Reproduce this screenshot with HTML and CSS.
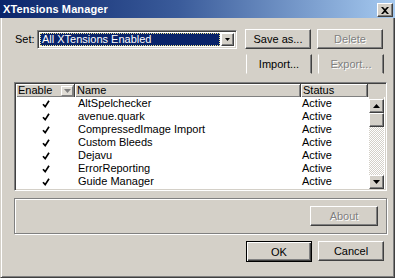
FILE: index.html
```html
<!DOCTYPE html>
<html lang="en">
<head>
  <meta charset="UTF-8" />
  <title>XTensions Manager</title>
  <link rel="stylesheet" href="styles.css">
</head>
<body>
  <div class="window">
    <div class="titlebar">
      <span class="title">XTensions Manager</span>
      <button class="close" type="button">
        <svg width="8" height="7" viewBox="0 0 8 7"><path d="M0 0h2l2 2 2-2h2L5 3.5 8 7H6L4 5 2 7H0l3-3.5z" fill="#000"/></svg>
      </button>
    </div>

    <div class="content">
      <div class="set-row">
        <label class="set-label">Set:</label>
        <div class="combo">
          <span class="combo-value"><span class="combo-text">All XTensions Enabled</span></span>
          <span class="combo-arrow"><svg width="5" height="3" viewBox="0 0 5 3"><path d="M0 0h5L2.5 3z" fill="#000"/></svg></span>
        </div>
        <button class="btn" type="button">Save as...</button>
        <button class="btn" type="button" disabled>Delete</button>
      </div>

      <div class="btn-row tight">
        <button class="btn flat" type="button">Import...</button>
        <button class="btn flat" type="button" disabled>Export...</button>
      </div>

      <div class="list">
        <div class="list-head">
          <div class="col-enable head-cell">Enable<span class="head-drop"><svg width="7" height="4" viewBox="0 0 7 4"><path d="M0 0h7L3.5 4z" fill="#808080"/></svg></span></div>
          <div class="col-name head-cell">Name</div>
          <div class="col-status head-cell">Status</div>
          <div class="head-fill"></div>
        </div>
        <div class="list-body">
          <div class="rows" id="rows"></div>
          <div class="scrollbar">
            <span class="sb-btn"><svg width="7" height="4" viewBox="0 0 7 4"><path d="M0 4h7L3.5 0z" fill="#000"/></svg></span>
            <span class="sb-thumb"></span>
            <span class="sb-track"></span>
            <span class="sb-btn"><svg width="7" height="4" viewBox="0 0 7 4"><path d="M0 0h7L3.5 4z" fill="#000"/></svg></span>
          </div>
        </div>
      </div>

      <div class="group">
        <button class="btn" type="button" disabled>About</button>
      </div>

      <div class="btn-row">
        <button class="btn default" type="button">OK</button>
        <button class="btn" type="button">Cancel</button>
      </div>
    </div>
  </div>

  <script>
    const xtensions = ['AltSpelchecker', 'avenue.quark', 'CompressedImage Import', 'Custom Bleeds', 'Dejavu', 'ErrorReporting', 'Guide Manager'];
    const rowsEl = document.getElementById('rows');
    xtensions.forEach(name => {
      const row = document.createElement('div');
      row.className = 'row';
      row.innerHTML = `<div class="col-enable cell-check"><svg width="8" height="8" viewBox="0 0 8 8"><path d="M1 4.2L3.2 6.6L7 0.8" fill="none" stroke="#000" stroke-width="1.7"/></svg></div>
        <div class="col-name cell">${name}</div>
        <div class="col-status cell">Active</div>`;
      rowsEl.appendChild(row);
    });
  </script>
</body>
</html>
```

FILE: styles.css
```css
:root {
  --face: #d4d0c8;
  --shadow: #808080;
  --dark: #404040;
  --navy: #0a246a;
}
* { box-sizing: border-box; }
body {
  margin: 0;
  background: var(--face);
  font-family: "Liberation Sans", Arial, sans-serif;
  font-size: 11px;
  color: #000;
}
.window {
  width: 395px;
  height: 278px;
  background: var(--face);
  border: 1px solid;
  border-top: 0;
  border-color: var(--face) var(--dark) var(--dark) var(--face);
  box-shadow: inset 1px 0 #fff, inset -1px -1px var(--shadow);
  display: flex;
  flex-direction: column;
}

/* title bar */
.titlebar {
  height: 18px;
  margin: 0 -1px;
  background: linear-gradient(90deg, var(--navy) 0%, #3a5b9a 45%, #a6caf0 100%);
  display: flex;
  align-items: center;
  justify-content: space-between;
  padding: 0 2px 0 3px;
}
.title { color: #fff; font-weight: bold; font-size: 11px; letter-spacing: 0.1px; }
.close {
  width: 16px;
  height: 14px;
  padding: 0;
  margin-top: 2px;
  background: var(--face);
  border: 1px solid;
  border-color: #fff var(--dark) var(--dark) #fff;
  box-shadow: inset -1px -1px var(--shadow);
  display: flex;
  align-items: center;
  justify-content: center;
}

.content { padding: 11px 7px 0 13px; display: flex; flex-direction: column; }

/* buttons */
.btn {
  width: 66px;
  height: 20px;
  padding: 0;
  font-family: inherit;
  font-size: 11px;
  color: #000;
  background: var(--face);
  border: 1px solid;
  border-color: #fff var(--dark) var(--dark) #fff;
  box-shadow: inset -1px -1px var(--shadow);
}
.btn:disabled { color: var(--shadow); text-shadow: 1px 1px #fff; }
.btn.flat { border-top-color: var(--face); border-bottom-color: var(--face); box-shadow: inset -1px 0 var(--shadow); }
.btn.default {
  height: 21px;
  border: 1px solid #000;
  box-shadow: inset 1px 1px #fff, inset -1px -1px var(--dark), inset -2px -2px var(--shadow);
}

.set-row { display: flex; align-items: center; height: 20px; }
.set-label { width: 23px; padding-left: 1px; }
.combo {
  width: 200px;
  height: 19px;
  margin-right: 8px;
  background: #fff;
  border: 1px solid;
  border-color: var(--shadow) #fff #fff var(--shadow);
  box-shadow: inset 1px 1px var(--dark), inset -1px -1px var(--face);
  padding: 2px 2px 2px 2px;
  display: flex;
}
.combo-value {
  flex: 1;
  background: var(--navy);
  color: #fff;
  outline: 1px dotted #f0e68c;
  outline-offset: -1px;
  padding-left: 2px;
  margin-right: 1px;
  display: flex;
  align-items: center;
}
.combo-arrow {
  width: 13px;
  background: var(--face);
  border: 1px solid;
  border-color: #fff var(--dark) var(--dark) #fff;
  box-shadow: inset -1px -1px var(--shadow);
  display: flex;
  align-items: center;
  justify-content: center;
}
.set-row .btn + .btn { margin-left: 6px; }

.btn-row { display: flex; justify-content: flex-end; gap: 6px; margin-right: 3px; margin-top: 7px; }
.btn-row.tight { margin-top: 5px; }

/* list view */
.list {
  margin-top: 8px;
  height: 109px;
  background: #fff;
  border: 1px solid;
  border-color: var(--shadow) #fff #fff var(--shadow);
  box-shadow: inset 1px 1px var(--dark), inset -1px -1px var(--face);
  padding: 1px;
  display: flex;
  flex-direction: column;
  overflow: hidden;
}
.list-head { display: flex; height: 13px; background: var(--face); }
.head-cell {
  height: 13px;
  line-height: 11px;
  padding-left: 2px;
  border-right: 1px solid var(--dark);
  box-shadow: inset 1px 1px #fff, inset -1px -1px var(--shadow);
  display: flex;
  align-items: center;
}
.head-fill { flex: 1; }
.col-enable { width: 59px; flex: none; }
.col-name { width: 226px; flex: none; }
.col-status { width: 67px; flex: none; }
.head-drop {
  margin-left: auto;
  margin-right: 1px;
  width: 12px;
  height: 10px;
  background: #e0ddd6;
  border: 1px solid;
  border-color: #fff var(--shadow) var(--shadow) #fff;
  display: flex;
  align-items: center;
  justify-content: center;
}

.list-body { flex: 1; display: flex; min-height: 0; }
.rows { flex: 1; overflow: hidden; }
.row { display: flex; height: 13px; align-items: center; }
.cell { padding-left: 3px; white-space: nowrap; line-height: 13px; }
.col-status.cell { padding-left: 1px; }
.cell-check { display: flex; justify-content: center; padding-left: 1px; }

.scrollbar {
  width: 15px;
  margin-right: 1px;
  padding-top: 2px;
  background: var(--face);
  display: flex;
  flex-direction: column;
}
.sb-btn, .sb-thumb {
  height: 14px;
  flex: none;
  background: var(--face);
  border: 1px solid;
  border-color: #fff var(--dark) var(--dark) #fff;
  box-shadow: inset -1px -1px var(--shadow);
  display: flex;
  align-items: center;
  justify-content: center;
}
.sb-track {
  flex: 1;
  background-color: #fff;
  background-image: conic-gradient(var(--face) 25%, #fff 0 50%, var(--face) 0 75%, #fff 0);
  background-size: 2px 2px;
}

/* group box with About */
.group {
  margin-top: 7px;
  height: 36px;
  border: 1px solid var(--shadow);
  box-shadow: inset 1px 1px #fff, 1px 1px #fff;
  display: flex;
  justify-content: flex-end;
  padding: 7px 8px 0 0;
}
.group .btn { width: 68px; }
```
